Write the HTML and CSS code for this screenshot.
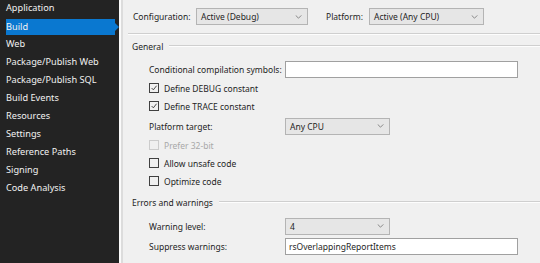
FILE: index.html
```html
<!DOCTYPE html>
<html>
<head>
<meta charset="utf-8">
<link rel="stylesheet" href="styles.css">
</head>
<body>
<div class="app">
  <nav class="sidebar">
    <div class="nav-item">Application</div>
    <div class="nav-item active">Build</div>
    <div class="nav-item">Web</div>
    <div class="nav-item">Package/Publish Web</div>
    <div class="nav-item">Package/Publish SQL</div>
    <div class="nav-item">Build Events</div>
    <div class="nav-item">Resources</div>
    <div class="nav-item">Settings</div>
    <div class="nav-item">Reference Paths</div>
    <div class="nav-item">Signing</div>
    <div class="nav-item">Code Analysis</div>
  </nav>
  <main class="main">
    <div class="toolbar">
      <span class="tb-label">Configuration:</span>
      <div class="combo combo-config"><span>Active (Debug)</span><svg class="chev" viewBox="0 0 8 5"><path d="M0.5 0.5 L4 4 L7.5 0.5" fill="none" stroke="#707070" stroke-width="1"/></svg></div>
      <span class="tb-label tb-platform">Platform:</span>
      <div class="combo combo-platform"><span>Active (Any CPU)</span><svg class="chev" viewBox="0 0 8 5"><path d="M0.5 0.5 L4 4 L7.5 0.5" fill="none" stroke="#707070" stroke-width="1"/></svg></div>
    </div>
    <div class="sep"></div>

    <div class="group-title"><span>General</span><div class="rule"></div></div>

    <div class="row row-cond">
      <span class="label">Conditional compilation symbols:</span>
      <div class="textbox wide"></div>
    </div>
    <div class="row row-g1">
      <span class="check checked"><svg viewBox="0 0 10 10"><path d="M2 5 L4.2 7.3 L8.2 2.2" fill="none" stroke="#333" stroke-width="1.1"/></svg></span>
      <span class="check-text">Define DEBUG constant</span>
    </div>
    <div class="row">
      <span class="check checked"><svg viewBox="0 0 10 10"><path d="M2 5 L4.2 7.3 L8.2 2.2" fill="none" stroke="#333" stroke-width="1.1"/></svg></span>
      <span class="check-text">Define TRACE constant</span>
    </div>
    <div class="row row-g2">
      <span class="label">Platform target:</span>
      <div class="combo narrow"><span>Any CPU</span><svg class="chev" viewBox="0 0 8 5"><path d="M0.5 0.5 L4 4 L7.5 0.5" fill="none" stroke="#707070" stroke-width="1"/></svg></div>
    </div>
    <div class="row row-g1 disabled">
      <span class="check"></span>
      <span class="check-text">Prefer 32-bit</span>
    </div>
    <div class="row">
      <span class="check"></span>
      <span class="check-text">Allow unsafe code</span>
    </div>
    <div class="row">
      <span class="check"></span>
      <span class="check-text">Optimize code</span>
    </div>

    <div class="group-title group-errors"><span>Errors and warnings</span><div class="rule"></div></div>

    <div class="row row-warn">
      <span class="label">Warning level:</span>
      <div class="combo narrow"><span>4</span><svg class="chev" viewBox="0 0 8 5"><path d="M0.5 0.5 L4 4 L7.5 0.5" fill="none" stroke="#707070" stroke-width="1"/></svg></div>
    </div>
    <div class="row row-g2">
      <span class="label">Suppress warnings:</span>
      <div class="textbox wide"><span>rsOverlappingReportItems</span></div>
    </div>
  </main>
</div>
</body>
</html>
```

FILE: styles.css
```css
* { box-sizing: border-box; }
html, body {
  margin: 0;
  padding: 0;
  width: 540px;
  height: 263px;
  overflow: hidden;
  background: #f0f0f0;
}
body {
  font-family: "Noto Sans", "Open Sans", sans-serif;
  font-size: 8.5px;
  color: #1e1e1e;
}
.app {
  display: flex;
  height: 263px;
}
.sidebar {
  width: 119px;
  flex: none;
  background: #232323;
  display: flex;
  flex-direction: column;
  margin-top: -1px;
  height: 264px;
  font-size: 9.2px;
}
.nav-item {
  height: 18px;
  line-height: 18px;
  padding-left: 6px;
  color: #f1f1f1;
  position: relative;
}
.nav-item.active {
  background: #0a78d0;
  margin-right: 4px;
  background-clip: content-box;
  padding-top: 2px;
  line-height: 16px;
}
.nav-item.active::after {
  content: "";
  position: absolute;
  right: -4px;
  top: 6px;
  border-left: 4px solid #0a78d0;
  border-top: 4px solid transparent;
  border-bottom: 4px solid transparent;
}
.main {
  flex: 1;
  border-left: 2px solid #fafafa;
  box-shadow: inset 2px 0 0 #dcdcdc;
  padding-top: 8px;
  padding-left: 10px;
  display: flex;
  flex-direction: column;
}
.toolbar {
  display: flex;
  align-items: center;
  height: 17px;
  padding-left: 2px;
}
.tb-label { width: 63px; }
.tb-platform { margin-left: 18px; width: 43px; }
.combo {
  height: 17px;
  background: #e6e6e6;
  border: 1px solid #b4b4b4;
  display: flex;
  align-items: center;
  justify-content: space-between;
  padding: 0 5px 0 4px;
}
.combo-config { width: 112px; }
.combo-platform { width: 115px; }
.chev { width: 7px; height: 4px; }
.sep {
  margin-top: 8px;
  margin-left: -3px;
  height: 2px;
  border-top: 1px solid #cfcfcf;
  border-bottom: 1px solid #fdfdfd;
}
.group-title {
  margin-top: 5px;
  height: 12px;
  display: flex;
  align-items: center;
  gap: 6px;
  padding-left: 1px;
}
.group-title .rule {
  flex: 1;
  height: 2px;
  border-top: 1px solid #cfcfcf;
  border-bottom: 1px solid #fdfdfd;
}
.group-errors { margin-top: 6px; }
.row {
  height: 18px;
  display: flex;
  align-items: center;
  padding-left: 18px;
}
.row-cond { margin-top: 8px; }
.row-g1 { margin-top: 1px; }
.row-g2 { margin-top: 2px; }
.row-warn { margin-top: 9px; }
.label { width: 136px; flex: none; }
.textbox {
  height: 17px;
  background: #fff;
  border: 1px solid #a0a0a0;
  display: flex;
  align-items: center;
  padding-left: 3px;
}
.wide { width: 233px; }
.narrow { width: 105px; }
.check {
  width: 10px;
  height: 10px;
  border: 1px solid #404040;
  display: flex;
  flex: none;
}
.check svg { width: 8px; height: 8px; }
.check-text { margin-left: 5px; }
.disabled .check { border-color: #cccccc; }
.disabled .check-text { color: #a8a8a8; }
```
